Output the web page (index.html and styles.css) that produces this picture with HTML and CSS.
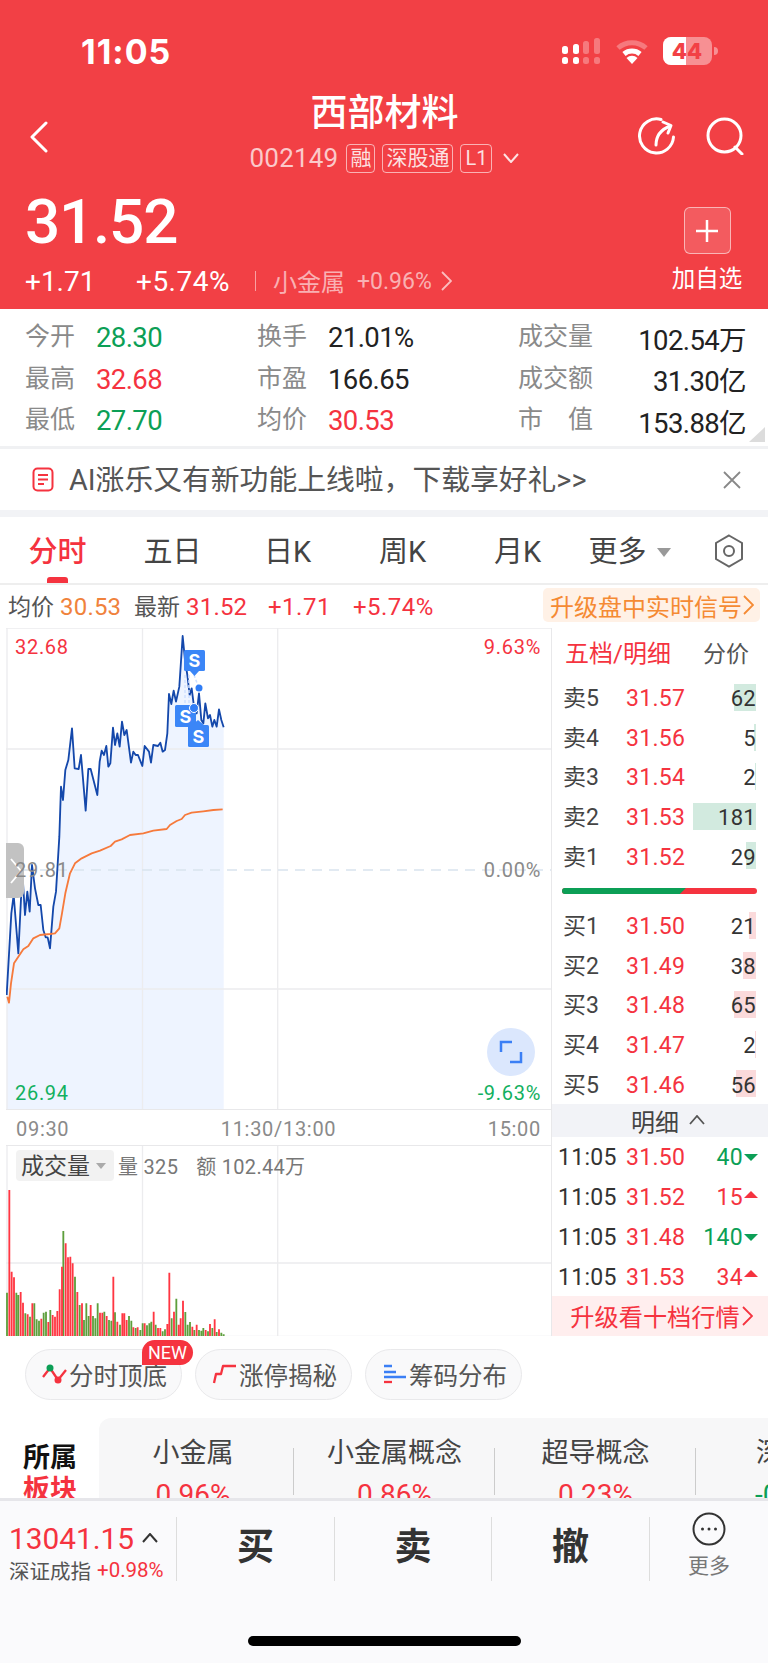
FILE: index.html
```html
<!DOCTYPE html>
<html lang="zh">
<head>
<meta charset="utf-8">
<title>西部材料</title>
<link rel="stylesheet" href="styles.css">
</head>
<body>
<div class="page">
  <header class="hero">
    <div class="status">
      <span class="clock">11:05</span>
      <svg class="status-icons" viewBox="562 37 156 28" width="156" height="28">
        <g class="sig-on">
          <rect x="562" y="46" width="6" height="8" rx="2.5"/><rect x="562" y="57" width="6" height="7" rx="2.5"/>
          <rect x="573" y="44" width="6" height="10" rx="2.5"/><rect x="573" y="57" width="6" height="7" rx="2.5"/>
        </g>
        <g class="sig-off">
          <rect x="583" y="41" width="6" height="13" rx="2.5"/><rect x="583" y="57" width="6" height="7" rx="2.5"/>
          <rect x="594" y="38" width="6" height="16" rx="2.5"/><rect x="594" y="57" width="6" height="7" rx="2.5"/>
        </g>
        <path class="wifi-off" d="M618 48A21 21 0 0 1 646 48"/>
        <path class="wifi-on" d="M624 54A12.500 12.500 0 0 1 640 54"/>
        <path class="wifi-dot" d="M632 64L626.500 58A8 8 0 0 1 637.500 58Z"/>
        <rect class="batt-back" x="663" y="37" width="49" height="28" rx="8"/>
        <path class="batt-fill" d="M671 37H686V65H671A8 8 0 0 1 663 57V45A8 8 0 0 1 671 37Z"/>
        <path class="batt-back" d="M714 47A4 4 0 0 1 714 55Z"/>
        <text class="batt-text" x="687" y="59" text-anchor="middle">44</text>
      </svg>
    </div>
    <div class="nav">
      <svg class="back" viewBox="0 0 18 32" width="18" height="32"><path d="M16 2L2 16L16 30"/></svg>
      <div class="nav-center">
        <h1 class="title">西部材料</h1>
        <div class="sub">
          <span class="code">002149</span>
          <span class="tag">融</span>
          <span class="tag">深股通</span>
          <span class="tag tag-l">L1</span>
          <svg class="sub-caret" viewBox="0 0 16 10" width="16" height="10"><path d="M1 1L8 9L15 1"/></svg>
        </div>
      </div>
      <div class="nav-actions">
        <svg viewBox="0 0 38 38" width="38" height="38"><path d="M23 2.500A17 17 0 1 0 35.500 20"/><path d="M18 28C18 20 22 13 32 9"/><path d="M25 5L33 8.500L30 16"/></svg>
        <svg viewBox="0 0 38 38" width="38" height="38"><circle cx="18.500" cy="18.500" r="16.500"/><path d="M29 30L36 37"/></svg>
      </div>
    </div>
    <div class="quote">
      <div class="quote-left">
        <div class="price">31.52</div>
        <div class="changes">
          <span class="chg-a">+1.71</span>
          <span class="chg-b">+5.74%</span>
          <i class="vsep"></i>
          <span class="sector">小金属</span>
          <span class="sector-pct">+0.96%</span>
          <svg class="sector-caret" viewBox="0 0 11 20" width="11" height="20"><path d="M1 1L10 10L1 19"/></svg>
        </div>
      </div>
      <div class="add">
        <div class="add-btn"><svg viewBox="0 0 24 24" width="24" height="24"><path d="M12 1V23M1 12H23"/></svg></div>
        <div class="add-label">加自选</div>
      </div>
    </div>
  </header>

  <section class="stats">
    <div class="stat"><span class="lbl">今开</span><span class="val green">28.30</span></div>
    <div class="stat"><span class="lbl">换手</span><span class="val">21.01%</span></div>
    <div class="stat stat-r"><span class="lbl">成交量</span><span class="val">102.54万</span></div>
    <div class="stat"><span class="lbl">最高</span><span class="val red">32.68</span></div>
    <div class="stat"><span class="lbl">市盈</span><span class="val">166.65</span></div>
    <div class="stat stat-r"><span class="lbl">成交额</span><span class="val">31.30亿</span></div>
    <div class="stat"><span class="lbl">最低</span><span class="val green">27.70</span></div>
    <div class="stat"><span class="lbl">均价</span><span class="val red">30.53</span></div>
    <div class="stat stat-r"><span class="lbl">市　值</span><span class="val">153.88亿</span></div>
    <i class="corner"></i>
  </section>

  <section class="notice">
    <svg class="notice-icon" viewBox="0 0 22 25" width="22" height="25"><rect x="1.500" y="1.500" width="19" height="22" rx="4"/><path d="M6 8H16M6 12.500H16M6 17H12"/></svg>
    <span class="notice-text">AI涨乐又有新功能上线啦，下载享好礼&gt;&gt;</span>
    <svg class="notice-x" viewBox="0 0 18 18" width="18" height="18"><path d="M1 1L17 17M17 1L1 17"/></svg>
  </section>

  <nav class="tabs">
    <span class="tab active">分时</span>
    <span class="tab">五日</span>
    <span class="tab">日K</span>
    <span class="tab">周K</span>
    <span class="tab">月K</span>
    <span class="tab tab-more">更多<i class="more-caret"></i></span>
    <svg class="hex" viewBox="0 0 30 34" width="30" height="34"><path d="M15 1.500L28 9V25L15 32.500L2 25V9Z"/><circle cx="15" cy="17" r="5"/></svg>
  </nav>

  <div class="info">
    <span class="info-l">均价</span><span class="info-v orange">30.53</span>
    <span class="info-l info-gap">最新</span><span class="info-v red">31.52</span>
    <span class="info-v red info-chg">+1.71</span>
    <span class="info-v red info-chg">+5.74%</span>
    <span class="upgrade">升级盘中实时信号<svg viewBox="0 0 11 20" width="11" height="20"><path d="M1 1L10 10L1 19"/></svg></span>
  </div>

  <div class="market">
    <div class="charts">
      <div class="price-chart">
        <svg class="chart-svg" viewBox="6 628 545 481" width="545" height="481">
          <g transform="translate(0 620) scale(0.33333)">
            <path class="area" d="M20 1125L34 880L41 825L55 1000L67 755L75 885L82 815L89 875L96 735L105 805L115 855L122 855L130 930L137 952L143 952L150 985L160 860L168 815L178 650L183 500L189 540L196 450L205 420L216 325L224 445L236 447L243 405L257 572L265 447L272 447L292 525L299 425L305 392L312 405L319 378L325 440L331 430L339 323L345 375L352 340L359 380L366 305L373 345L380 330L393 428L400 395L407 405L414 405L427 438L434 378L447 395L453 428L460 375L474 378L481 368L488 395L495 390L502 340L507 222L514 252L521 212L528 245L538 200L548 48L555 120L562 165L569 225L575 205L582 260L590 280L597 220L604 300L610 310L616 250L624 295L630 285L637 320L643 300L650 320L657 268L664 300L671 322V1468H20Z"/>
          </g>
          <path class="grid" d="M6 628H551M7 628V1109M142.500 628V1109M277.700 628V1109M6 749H551M6 989H551"/>
          <path class="mid" d="M6 870H551"/>
          <g transform="translate(0 620) scale(0.33333)">
            <polyline class="blue-line" points="20,1125 34,880 41,825 55,1000 67,755 75,885 82,815 89,875 96,735 105,805 115,855 122,855 130,930 137,952 143,952 150,985 160,860 168,815 178,650 183,500 189,540 196,450 205,420 216,325 224,445 236,447 243,405 257,572 265,447 272,447 292,525 299,425 305,392 312,405 319,378 325,440 331,430 339,323 345,375 352,340 359,380 366,305 373,345 380,330 393,428 400,395 407,405 414,405 427,438 434,378 447,395 453,428 460,375 474,378 481,368 488,395 495,390 502,340 507,222 514,252 521,212 528,245 538,200 548,48 555,120 562,165 569,225 575,205 582,260 590,280 597,220 604,300 610,310 616,250 624,295 630,285 637,320 643,300 650,320 657,268 664,300 671,322"/>
            <polyline class="orange-line" points="22,1130 27,1148 33,1090 42,1030 55,1010 70,988 85,978 100,955 120,945 150,942 165,940 178,925 186,880 196,820 210,760 225,730 245,715 275,700 300,692 332,678 345,665 365,658 390,645 430,640 460,632 500,627 510,615 530,603 545,597 555,585 575,578 610,574 640,570 668,568"/>
          </g>
          <path class="sig-dash" d="M185 675V706M189 675V706M194 675L199 688"/>
          <circle class="sig-dot" cx="199" cy="688" r="3.500"/>
          <g class="s-mark">
            <rect x="184" y="650" width="21" height="21" rx="1.500"/><path d="M190 671H199L194.500 676Z"/>
            <text x="194.500" y="667">S</text>
          </g>
          <g class="s-mark">
            <rect x="175" y="705" width="21" height="22" rx="1.500"/>
            <text x="185.500" y="722.500">S</text>
          </g>
          <circle class="sig-dot ring" cx="194" cy="708" r="4.500"/>
          <g class="s-mark">
            <rect x="188" y="725" width="21" height="22" rx="1.500"/><path d="M192 725H204L198 720Z"/>
            <text x="198.500" y="742.500">S</text>
          </g>
        </svg>
        <div class="handle"><svg viewBox="0 0 12 26" width="12" height="26"><path d="M1 1L11 13L1 25"/></svg></div>
        <span class="axis axis-hi red">32.68</span>
        <span class="axis axis-mid">29.81</span>
        <span class="axis axis-lo green">26.94</span>
        <span class="axis axis-r axis-hi red">9.63%</span>
        <span class="axis axis-r axis-mid">0.00%</span>
        <span class="axis axis-r axis-lo green">-9.63%</span>
        <div class="expand"><svg viewBox="0 0 24 24" width="24" height="24"><path d="M2 12V2H13M22 12V22H11"/></svg></div>
      </div>
      <div class="time-axis"><span>09:30</span><span>11:30/13:00</span><span>15:00</span></div>
      <div class="volume">
        <svg class="chart-svg" viewBox="6 1146 545 191" width="545" height="191">
          <path class="grid" d="M7 1146V1336M142.500 1146V1336M277.700 1146V1336M6 1263H551M6 1336.500H551"/>
          <g transform="translate(0 1130) scale(0.33333)">
            <path class="vol-g" d="M21 618V488M49 618V488M55 618V495M76 618V550M90 618V560M103 618V520M110 618V568M117 618V572M131 618V548M138 618V545M151 618V540M190 618V303M225 618V440M239 618V525M252 618V570M259 618V520M266 618V558M279 618V558M286 618V565M293 618V520M313 618V545M327 618V570M334 618V572M345 618V547M360 618V584M387 618V558M394 618V572M407 618V594M421 618V600M428 618V580M441 618V586M448 618V580M454 618V575M467 618V584M488 618V604M495 618V598M515 618V565M529 618V506M556 618V546M563 618V584M570 618V576M583 618V600M597 618V600M604 618V602M610 618V594M624 618V604M637 618V594M650 618V606M664 618V608M671 618V613"/>
            <path class="vol-r" d="M28 618V180M35 618V425M42 618V442M62 618V486M69 618V518M83 618V553M97 618V520M124 618V566M145 618V576M158 618V555M165 618V560M172 618V543M179 618V478M186 618V410M197 618V340M204 618V382M211 618V380M218 618V400M232 618V486M246 618V520M272 618V525M300 618V548M307 618V548M320 618V558M340 618V440M352 618V575M367 618V550M373 618V550M380 618V570M400 618V592M413 618V592M434 618V580M461 618V545M474 618V594M481 618V594M502 618V582M508 618V428M522 618V545M536 618V584M542 618V565M549 618V512M577 618V590M590 618V584M617 618V600M630 618V582M644 618V568M657 618V598"/>
          </g>
        </svg>
        <div class="vol-head">
          <span class="vol-select"><span class="vol-name">成交量</span><i class="vol-caret"></i></span>
          <span class="vol-text"><b>量</b> 325</span>
          <span class="vol-text vol-amt"><b>额</b> 102.44万</span>
        </div>
      </div>
    </div>

    <aside class="book">
      <div class="book-head"><span class="book-title">五档/明细</span><span class="book-alt">分价</span></div>
      <div class="level"><i class="bar bar-g" style="width:22px"></i><span class="level-l">卖5</span><span class="level-p">31.57</span><span class="level-v">62</span></div>
      <div class="level"><i class="bar bar-g" style="width:2px"></i><span class="level-l">卖4</span><span class="level-p">31.56</span><span class="level-v">5</span></div>
      <div class="level"><i class="bar bar-g" style="width:1px"></i><span class="level-l">卖3</span><span class="level-p">31.54</span><span class="level-v">2</span></div>
      <div class="level"><i class="bar bar-g" style="width:63px"></i><span class="level-l">卖2</span><span class="level-p">31.53</span><span class="level-v">181</span></div>
      <div class="level"><i class="bar bar-g" style="width:10px"></i><span class="level-l">卖1</span><span class="level-p">31.52</span><span class="level-v">29</span></div>
      <div class="power"><div class="power-track"><i class="power-g"></i></div></div>
      <div class="level"><i class="bar bar-r" style="width:7px"></i><span class="level-l">买1</span><span class="level-p">31.50</span><span class="level-v">21</span></div>
      <div class="level"><i class="bar bar-r" style="width:13px"></i><span class="level-l">买2</span><span class="level-p">31.49</span><span class="level-v">38</span></div>
      <div class="level"><i class="bar bar-r" style="width:22px"></i><span class="level-l">买3</span><span class="level-p">31.48</span><span class="level-v">65</span></div>
      <div class="level"><i class="bar bar-r" style="width:1px"></i><span class="level-l">买4</span><span class="level-p">31.47</span><span class="level-v">2</span></div>
      <div class="level"><i class="bar bar-r" style="width:20px"></i><span class="level-l">买5</span><span class="level-p">31.46</span><span class="level-v">56</span></div>
      <div class="detail-head">明细<svg viewBox="0 0 16 10" width="16" height="10"><path d="M1 9L8 1L15 9"/></svg></div>
      <div class="tick"><span class="tick-t">11:05</span><span class="tick-p">31.50</span><span class="tick-v green">40</span><i class="tri tri-down"></i></div>
      <div class="tick"><span class="tick-t">11:05</span><span class="tick-p">31.52</span><span class="tick-v red">15</span><i class="tri tri-up"></i></div>
      <div class="tick"><span class="tick-t">11:05</span><span class="tick-p">31.48</span><span class="tick-v green">140</span><i class="tri tri-down"></i></div>
      <div class="tick"><span class="tick-t">11:05</span><span class="tick-p">31.53</span><span class="tick-v red">34</span><i class="tri tri-up"></i></div>
      <div class="book-up">升级看十档行情<svg viewBox="0 0 11 20" width="11" height="20"><path d="M1 1L10 10L1 19"/></svg></div>
    </aside>
  </div>

  <div class="pills">
    <div class="pill">
      <svg viewBox="0 0 26 20" width="26" height="20"><path class="i-red" d="M1 13L8 4L16 16L24 6"/><circle class="i-fill-g" cx="8" cy="4" r="3.500"/><circle class="i-fill-r" cx="16" cy="16" r="3.500"/></svg>
      <span>分时顶底</span>
      <b class="badge">NEW</b>
    </div>
    <div class="pill">
      <svg viewBox="0 0 26 20" width="26" height="20"><path class="i-red" d="M2 19L4 10H9L11 2H24"/></svg>
      <span>涨停揭秘</span>
    </div>
    <div class="pill">
      <svg viewBox="0 0 26 20" width="26" height="20"><path class="i-blue" d="M2 2H10M2 8H14M2 13H24"/><path class="i-red" d="M2 18H10"/></svg>
      <span>筹码分布</span>
    </div>
  </div>

  <section class="blocks">
    <div class="blocks-head"><span>所属</span><span class="red">板块</span></div>
    <div class="blocks-card">
      <div class="block block-first"><span class="block-n">小金属</span><span class="block-p red">0.96%</span></div>
      <div class="block"><span class="block-n">小金属概念</span><span class="block-p red">0.86%</span></div>
      <div class="block"><span class="block-n">超导概念</span><span class="block-p red">0.23%</span></div>
      <div class="block"><span class="block-n">深股通</span><span class="block-p green">-0.12%</span></div>
    </div>
  </section>

  <footer class="dock">
    <div class="dock-row">
      <div class="index">
        <div class="index-top"><span class="index-v">13041.15</span><svg viewBox="0 0 16 10" width="16" height="10"><path d="M1 9L8 1L15 9"/></svg></div>
        <div class="index-bot"><span class="index-n">深证成指</span><span class="index-p">+0.98%</span></div>
      </div>
      <div class="dock-btn">买</div>
      <div class="dock-btn">卖</div>
      <div class="dock-btn">撤</div>
      <div class="dock-more">
        <svg viewBox="0 0 34 34" width="34" height="34"><circle class="more-ring" cx="17" cy="17" r="15.500"/><circle class="more-dot" cx="10.500" cy="17" r="1.500"/><circle class="more-dot" cx="17" cy="17" r="1.500"/><circle class="more-dot" cx="23.500" cy="17" r="1.500"/></svg>
        <span>更多</span>
      </div>
    </div>
    <i class="home"></i>
  </footer>
</div>
</body>
</html>
```

FILE: styles.css
```css
* { box-sizing: border-box; }
html, body { margin: 0; padding: 0; background: #fff; }
body { font-family: Roboto, "Noto Sans CJK SC", sans-serif; color: #222; }
i { display: block; font-style: normal; }
svg { display: block; flex: none; }
.page { position: relative; width: 768px; height: 1663px; overflow: hidden; background: #fff; }
.red { color: #f5333f; }
.green { color: #0c9f56; }
.orange { color: #f0823c; }

/* header */
.hero { height: 309px; background: #f24045; color: #fff; }
.status { height: 76px; padding: 38px 50px 0 81px; display: flex; justify-content: space-between; align-items: flex-start; }
.status-icons { margin-top: -1px; }
.clock { font: 700 34px/28px Inter, sans-serif; letter-spacing: 1px; }
.sig-on rect { fill: #fff; }
.sig-off rect { fill: rgba(255,255,255,.3); }
.wifi-off { fill: none; stroke: rgba(255,255,255,.3); stroke-width: 5; }
.wifi-on { fill: none; stroke: #fff; stroke-width: 5; }
.wifi-dot { fill: #fff; }
.batt-back { fill: rgba(255,255,255,.42); }
.batt-fill { fill: #fff; }
.batt-text { font: 800 22px Inter, sans-serif; fill: #f24045; }
.nav { height: 104px; padding: 14px 24px 0 30px; display: flex; justify-content: space-between; align-items: flex-start; position: relative; }
.back { margin-top: 31px; fill: none; }
.back path { fill: none; stroke: #fff; stroke-width: 3; stroke-linecap: round; stroke-linejoin: round; }
.nav-center { position: absolute; left: 0; right: 0; top: 16px; display: flex; flex-direction: column; align-items: center; padding-left: 1px; }
.title { margin: 0; font-size: 37px; line-height: 44px; font-weight: 500; }
.sub { display: flex; align-items: center; margin-top: 7px; height: 30px; }
.code { font-size: 26px; color: rgba(255,255,255,.72); letter-spacing: 0.2px; margin-right: 8px; }
.tag { height: 29px; padding: 0 3px; margin-right: 7px; border: 1.500px solid rgba(255,255,255,.6); border-radius: 4px; font-size: 21px; line-height: 26px; color: rgba(255,255,255,.85); }
.tag-l { margin-right: 11px; font-size: 20px; padding: 0 4px; }
.sub-caret path { fill: none; stroke: rgba(255,255,255,.85); stroke-width: 2; }
.nav-actions { display: flex; gap: 30px; padding-top: 27px; }
.nav-actions path, .nav-actions circle { fill: none; stroke: #fff; stroke-width: 3; stroke-linecap: round; stroke-linejoin: round; }
.quote { height: 129px; padding: 12px 26px 0 25px; display: flex; justify-content: space-between; }
.price { font-size: 62px; line-height: 60px; font-weight: 500; letter-spacing: -1.2px; }
.changes { height: 30px; margin-top: 14px; display: flex; align-items: center; font-size: 28px; }
.chg-a { width: 111px; }
.chg-b { width: 119px; letter-spacing: 0.5px; }
.vsep { width: 1px; height: 20px; background: rgba(255,255,255,.5); margin-right: 17px; }
.sector { font-size: 24px; color: rgba(255,255,255,.6); width: 84px; margin-top: -2px; }
.sector-pct { font-size: 23px; color: rgba(255,255,255,.6); width: 84px; }
.sector-caret path { fill: none; stroke: rgba(255,255,255,.65); stroke-width: 1.800; }
.add { width: 70px; display: flex; flex-direction: column; align-items: center; padding-top: 15px; }
.add-btn { width: 47px; height: 47px; border: 1.500px solid rgba(255,255,255,.55); border-radius: 6px; background: rgba(255,255,255,.14); display: flex; align-items: center; justify-content: center; }
.add-btn path { stroke: #fff; stroke-width: 2.500; fill: none; }
.add-label { margin-top: 10px; font-size: 23.500px; line-height: 30px; white-space: nowrap; }

/* stats */
.stats { position: relative; height: 140px; padding: 7px 22px 0 25px; display: grid; grid-template-columns: 232px 261px 1fr; grid-auto-rows: 41.500px; border-bottom: 3px solid #f0f1f3; }
.stat { display: flex; align-items: center; }
.lbl { font-size: 25px; color: #8a8a8a; min-width: 71px; margin-top: -5px; }
.stat-r { justify-content: space-between; }
.val { font-size: 27.500px; letter-spacing: -0.6px; margin-top: 2px; }
.corner { position: absolute; right: 3px; bottom: 4px; width: 16px; height: 15px; background: #dcdcdc; clip-path: polygon(100% 0, 100% 100%, 0 100%); }

/* notice */
.notice { height: 61px; background: #fff; display: flex; align-items: center; padding: 0 27px 0 32px; }
.notice-icon rect, .notice-icon path { fill: none; stroke: #f5333f; stroke-width: 2; }
.notice-text { margin-left: 15px; margin-top: -4px; font-size: 28.800px; color: #555; white-space: nowrap; flex: 1; }
.notice-x path { fill: none; stroke: #888; stroke-width: 1.800; }

/* tabs */
.tabs { position: relative; height: 75px; border-top: 7px solid #f2f3f6; border-bottom: 2px solid #eee; display: flex; align-items: flex-start; }
.tab { width: 115px; height: 66px; line-height: 70px; text-align: center; font-size: 29px; color: #444; position: relative; }
.tab.active { color: #f5333f; font-weight: 500; }
.tab.active::after { content: ""; position: absolute; left: 47px; bottom: 0; width: 21px; height: 6px; border-radius: 3px 3px 0 0; background: #f5333f; }
.tab-more { width: 111px; display: flex; align-items: center; justify-content: center; gap: 10px; padding: 4px 2px 0 0; }
.more-caret { width: 0; height: 0; border-left: 7px solid transparent; border-right: 7px solid transparent; border-top: 9px solid #999; }
.hex { margin: 17px 0 0 28px; }
.hex path, .hex circle { fill: none; stroke: #666; stroke-width: 2; }

/* info row */
.info { height: 43px; padding: 0 8px; display: flex; align-items: center; font-size: 24px; white-space: nowrap; }
.info-l { color: #555; width: 52px; font-size: 23px; margin-top: -3px; }
.info-gap { margin-left: 14px; }
.info-v { letter-spacing: 0.200px; width: 60px; }
.info-chg { margin-left: 22px; width: auto; letter-spacing: 0.500px; }
.upgrade { margin-left: auto; height: 34px; margin-top: -3px; padding: 0 6px 0 7px; display: flex; align-items: center; gap: 1px; border-radius: 5px; background: #fff1e6; color: #f58a33; font-size: 24px; }
.upgrade path { fill: none; stroke: #f58a33; stroke-width: 1.800; }

/* chart */
.market { display: flex; height: 708px; padding-left: 6px; }
.charts { width: 545px; }
.price-chart { position: relative; height: 481px; }
.chart-svg { display: block; }
.area { fill: #eef4ff; }
.grid { fill: none; stroke: #ececee; stroke-width: 1.300; }
.mid { fill: none; stroke: #d9e3ee; stroke-width: 1.500; stroke-dasharray: 10 7; }
.blue-line { fill: none; stroke: #1448ab; stroke-width: 5.500; stroke-linejoin: round; }
.orange-line { fill: none; stroke: #f67a3c; stroke-width: 5.500; stroke-linejoin: round; }
.sig-dash { fill: none; stroke: #cfe0ff; stroke-width: 1.500; stroke-dasharray: 3 2; }
.sig-dot { fill: #2f7df6; }
.sig-dot.ring { stroke: #fff; stroke-width: 1; }
.s-mark rect, .s-mark path { fill: #3b86f7; }
.s-mark text { font: 700 18px Inter, sans-serif; fill: #fff; text-anchor: middle; }
.axis { position: absolute; left: 9px; font-size: 20px; line-height: 24px; letter-spacing: 0.700px; color: #8a8a8a; }
.axis-r { left: auto; right: 10px; }
.axis-hi { top: 7px; color: #f5333f; }
.axis-mid { top: 230px; }
.axis-lo { top: 453px; color: #12b060; }
.handle { position: absolute; left: 0; top: 215px; width: 18px; height: 55px; background: #c2c2c2; border-radius: 0 6px 6px 0; display: flex; align-items: center; padding-left: 4px; }
.handle path { fill: none; stroke: #fff; stroke-width: 1.800; }
.expand { position: absolute; left: 481px; top: 400px; width: 48px; height: 48px; border-radius: 50%; background: #dbe7fd; display: flex; align-items: center; justify-content: center; }
.expand path { fill: none; stroke: #3b7ff5; stroke-width: 2.500; }
.time-axis { height: 37px; padding: 2px 10px 0; display: flex; justify-content: space-between; align-items: center; font-size: 20px; letter-spacing: 0.700px; color: #8a8a8a; border-top: 1.500px solid #e8e8ea; border-bottom: 1.500px solid #e8e8ea; }
.volume { position: relative; height: 190px; overflow: hidden; }
.vol-g { fill: none; stroke: #5d9f3c; stroke-width: 5.500; }
.vol-r { fill: none; stroke: #ff3642; stroke-width: 5.500; }
.vol-head { position: absolute; left: 10px; top: 4px; display: flex; align-items: center; height: 31px; white-space: nowrap; }
.vol-select { height: 31px; width: 98px; padding-left: 5px; display: flex; align-items: center; gap: 6px; background: #f2f2f2; border-radius: 4px; font-size: 23px; color: #444; }
.vol-name { margin-top: -3px; }
.vol-caret { width: 0; height: 0; border-left: 5px solid transparent; border-right: 5px solid transparent; border-top: 6px solid #aaa; }
.vol-text { margin-left: 4px; font-size: 20px; letter-spacing: 0.300px; color: #777; }
.vol-text b { font-weight: 400; }
.vol-amt { margin-left: 18px; }

/* order book */
.book { width: 217px; border-left: 1.500px solid #e8e8ea; }
.book-head { height: 50px; padding: 0 19px 3px 13px; display: flex; justify-content: space-between; align-items: center; }
.book-title { font-size: 24px; color: #f5333f; }
.book-alt { font-size: 23px; color: #555; }
.level { position: relative; height: 39.600px; padding: 0 12px 0 11px; display: grid; grid-template-columns: 63px 57px 1fr; align-items: center; }
.bar { position: absolute; right: 12px; top: 6px; height: 27px; }
.bar-g { background: #d2eadf; }
.bar-r { background: #fbdadb; }
.level-l { position: relative; font-size: 23px; color: #444; margin-top: -3px; }
.level-p { position: relative; font-size: 23px; color: #f5333f; letter-spacing: 0.300px; margin-top: 2px; }
.level-v { position: relative; font-size: 22px; color: #333; text-align: right; letter-spacing: 0.300px; margin-top: 2px; }
.power { height: 30px; padding: 12px 11px 0 10px; }
.power-track { height: 6px; border-radius: 3px; background: #f5333f; overflow: hidden; }
.power-g { width: 124px; height: 6px; background: #0c9f56; clip-path: polygon(0 0, 100% 0, 95% 100%, 0 100%); }
.detail-head { height: 33px; background: #f2f3f7; display: flex; align-items: center; justify-content: center; gap: 10px; font-size: 24px; color: #444; padding-left: 16px; }
.detail-head path { fill: none; stroke: #555; stroke-width: 1.800; }
.tick { height: 39.750px; padding: 2px 10px 0 6px; display: grid; grid-template-columns: 68px 58px 1fr 16px; align-items: center; font-size: 23px; letter-spacing: 0.300px; }
.tick-t { color: #333; }
.tick-p { color: #f5333f; }
.tick-v { text-align: right; margin-right: -1px; }
.tri { justify-self: end; width: 0; height: 0; border-left: 7px solid transparent; border-right: 7px solid transparent; }
.tri-down { border-top: 7px solid #0c9f56; }
.tri-up { border-bottom: 7px solid #f5333f; margin-top: -7px; }
.book-up { height: 40px; background: #ffeeee; color: #f5333f; font-size: 24.200px; display: flex; align-items: center; justify-content: center; gap: 2px; padding-left: 3px; }
.book-up path { fill: none; stroke: #f5333f; stroke-width: 1.800; }

/* pills */
.pills { height: 82px; padding: 13px 0 0 25px; display: flex; gap: 13px; align-items: flex-start; }
.pill { position: relative; width: 157px; height: 51px; border: 1.500px solid #e9e9eb; border-radius: 26px; background: #f9f9fa; display: flex; align-items: center; gap: 1px; padding-left: 16px; font-size: 24.500px; color: #555; }
.pill svg { margin-top: -2px; }
.i-red { fill: none; stroke: #f5333f; stroke-width: 2.300; stroke-linejoin: round; }
.i-blue { fill: none; stroke: #3b7ff5; stroke-width: 2.500; }
.i-fill-g { fill: #0c9f56; }
.i-fill-r { fill: #f5333f; }
.badge { position: absolute; right: -12px; top: -10px; width: 51px; height: 25px; border-radius: 13px 13px 13px 0; background: #f5333f; color: #fff; font-size: 18px; font-weight: 400; line-height: 25px; text-align: center; }

/* blocks */
.blocks { height: 200px; display: flex; }
.blocks-head { width: 99px; padding: 24px 0 0 23px; display: flex; flex-direction: column; font-size: 27px; line-height: 32px; font-weight: 700; color: #111; }
.blocks-card { flex: 1; display: flex; background: #f7f7f8; border-radius: 12px 0 0 0; overflow: hidden; padding-top: 17px; }
.block { position: relative; flex: none; width: 201px; display: flex; flex-direction: column; align-items: center; }
.block-first { width: 195px; padding-right: 7px; }
.block::after { content: ""; position: absolute; right: 0; top: 13px; width: 1.500px; height: 47px; background: #ccc; }
.block-n { font-size: 27px; line-height: 36px; color: #444; white-space: nowrap; }
.block-p { font-size: 28px; line-height: 38px; margin-top: 5px; }

/* dock */
.dock { position: absolute; left: 0; right: 0; bottom: 0; height: 165px; background: #fafafc; border-top: 3px solid #e6e6ea; }
.dock-row { display: grid; grid-template-columns: 177px 158px 157px 158px 1fr; height: 60px; margin-top: 16px; }
.index { padding: 2px 0 0 9px; border-right: 1.500px solid #ddd; white-space: nowrap; }
.index-top { display: flex; align-items: center; gap: 8px; height: 38px; }
.index-top path { fill: none; stroke: #333; stroke-width: 2; }
.index-v { font-size: 29.800px; color: #f5333f; }
.index-bot { display: flex; align-items: center; gap: 6px; height: 22px; margin-top: 2px; }
.index-n { font-size: 20.500px; color: #555; }
.index-p { font-size: 20.500px; color: #f5333f; }
.dock-btn { display: flex; align-items: center; justify-content: center; padding-bottom: 10px; border-right: 1.500px solid #ddd; font-size: 37px; font-weight: 700; color: #333; }
.dock-more { display: flex; flex-direction: column; align-items: center; margin-top: -5px; font-size: 21px; color: #777; gap: 3px; }
.more-ring { fill: none; stroke: #333; stroke-width: 2; }
.more-dot { fill: #333; }
.home { position: absolute; left: 248px; top: 135px; width: 273px; height: 10px; border-radius: 5px; background: #000; }
```
